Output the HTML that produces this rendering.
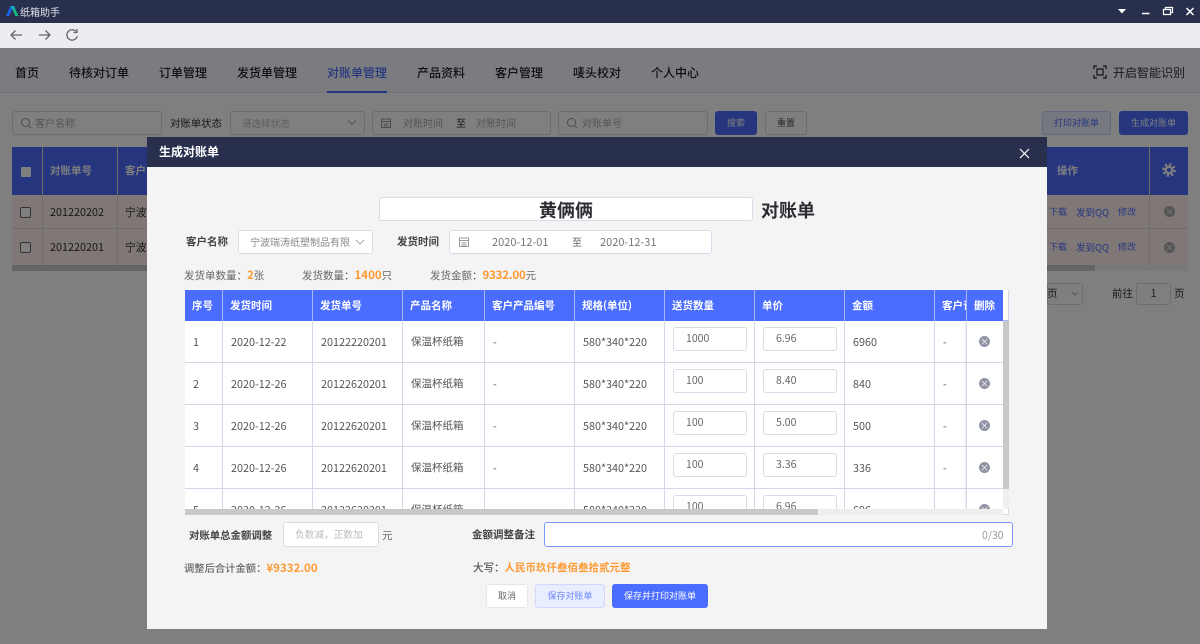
<!DOCTYPE html>
<html lang="zh"><head><meta charset="utf-8"><title>纸箱助手</title>
<style>
*{box-sizing:border-box;margin:0;padding:0}
html,body{width:1200px;height:644px;overflow:hidden;background:#fff}
body{position:relative;font-family:"Noto Sans CJK SC","Liberation Sans",sans-serif;font-size:12px;color:#333}
.a{position:absolute}
.t{position:absolute;white-space:nowrap;line-height:16px}
.b{font-weight:700}
.k{font-family:"Noto Sans CJK TC","Noto Sans CJK SC",sans-serif}
.box{position:absolute;background:#fff;border:1px solid #d9dbe8;border-radius:3px}
.o{color:#ff9a33;font-weight:700}
.h{position:absolute;top:290px;height:31px;background:#4a6cff;color:#fff;font-weight:700;font-size:10.500px;line-height:31px;white-space:nowrap;overflow:hidden;border-right:1px solid #a9b8f5;padding-left:7px}
.c{position:absolute;color:#555;white-space:nowrap;line-height:16px;font-size:10.800px}
.vl{position:absolute;width:1px;top:321px;height:188px;background:#d4d7e8}
.hl{position:absolute;left:185px;width:818px;height:1px;background:#d4d7e8}
.inp{position:absolute;width:74px;height:24px;background:#fff;border:1px solid #d9dbe8;border-radius:3px;color:#666;font-size:10.500px;line-height:22px;padding-left:12px}
.nav{position:absolute;top:64px;font-size:12px;line-height:18px;color:#1f2026;white-space:nowrap;font-weight:500}
.x{position:absolute;width:11px;height:11px;border-radius:50%;background:#8f93a3;color:#fff;font-size:9px;line-height:11px;text-align:center}
.btn{text-align:center;font-size:9px;line-height:22px}
.lk{color:#4a6cff;font-size:9px}
</style></head><body>

<!-- underlying page -->
<div class="a" style="left:0;top:0;width:1200px;height:23px;background:#29304d"></div>
<svg class="a" style="left:6px;top:6px" width="13" height="10" viewBox="0 0 13 10"><path d="M4.500 0H8l4.500 10H9.300L6.300 3z" fill="#12b886"/><path d="M4.500 0 0 10h3L6.300 3 6 0z" fill="#1a62e8"/><path d="M4.500 0H8L9 2.500H5.500z" fill="#18a8c8"/></svg>
<div class="t" style="left:20px;top:4px;color:#dfe2ea;font-size:10px">纸箱助手</div>
<svg class="a" style="left:1110px;top:4px" width="90" height="16" viewBox="0 0 90 16" fill="none" stroke="#fff"><path d="M8 5h8l-4 4.500z" fill="#fff" stroke="none"/><path d="M32 9.500h7.500" stroke-width="1.500"/><path d="M53.500 5.500h7v5h-7zM55.500 5.500V3.500h7v5h-2" stroke-width="1.200"/><path d="M76.500 4l7 7M83.500 4l-7 7" stroke-width="1.500"/></svg>
<div class="a" style="left:0;top:23px;width:1200px;height:25px;background:#ecedf2"></div>
<svg class="a" style="left:8px;top:27px" width="74" height="16" viewBox="0 0 74 16" fill="none" stroke="#666" stroke-width="1.300"><path d="M3 8h11M7.500 3.500 3 8l4.500 4.500"/><path d="M31 8h11M37.500 3.500 42 8l-4.500 4.500"/><path d="M68 4.500A5.200 5.200 0 1 0 69.200 9"/><path d="M69 2v3.500h-3.500"/></svg>

<div class="a" style="left:0;top:48px;width:1200px;height:45px;background:#f7f9ff;border-bottom:1px solid #e4e5ea"></div>
<div class="nav" style="left:15px">首页</div>
<div class="nav" style="left:69px">待核对订单</div>
<div class="nav" style="left:159px">订单管理</div>
<div class="nav" style="left:237px">发货单管理</div>
<div class="nav" style="left:327px;color:#4a6cff">对账单管理</div>
<div class="a" style="left:327px;top:91px;width:60px;height:2px;background:#4a6cff"></div>
<div class="nav" style="left:417px">产品资料</div>
<div class="nav" style="left:495px">客户管理</div>
<div class="nav" style="left:573px">唛头校对</div>
<div class="nav" style="left:651px">个人中心</div>
<svg class="a" style="left:1093px;top:65px" width="14" height="14" viewBox="0 0 14 14" fill="none" stroke="#333" stroke-width="1.300"><path d="M1 4V1h3M10 1h3v3M13 10v3h-3M4 13H1v-3"/><rect x="4" y="4" width="6" height="6"/></svg>
<div class="t" style="left:1113px;top:64px;color:#333;font-size:12px;line-height:18px">开启智能识别</div>

<div class="box" style="left:12px;top:111px;width:150px;height:24px"></div>
<svg class="a" style="left:20px;top:117px" width="12" height="12" viewBox="0 0 12 12" fill="none" stroke="#999"><circle cx="5.500" cy="5.500" r="4"/><path d="M8.500 8.500 11 11"/></svg>
<div class="t" style="left:35px;top:115px;color:#aaa;font-size:10px">客户名称</div>
<div class="t" style="left:170px;top:115px;font-size:10.400px">对账单状态</div>
<div class="box" style="left:230px;top:111px;width:135px;height:24px"></div>
<div class="t" style="left:242px;top:115px;color:#bbb;font-size:9.600px">请选择状态</div>
<svg class="a" style="left:347px;top:119px" width="10" height="8" viewBox="0 0 10 8" fill="none" stroke="#aaa"><path d="M1 1.500 5 5.500 9 1.500"/></svg>
<div class="box" style="left:372px;top:111px;width:179px;height:24px"></div>
<svg class="a" style="left:381px;top:118px" width="10" height="10" viewBox="0 0 10 10" fill="none" stroke="#999"><rect x=".5" y="1" width="9" height="8.500"/><path d="M.5 3.500h9M2.500 6h5M2.500 8h5"/></svg>
<div class="t" style="left:403px;top:115px;color:#aaa;font-size:10px">对账时间</div>
<div class="t" style="left:456px;top:115px;font-size:10px">至</div>
<div class="t" style="left:476px;top:115px;color:#aaa;font-size:10px">对账时间</div>
<div class="box" style="left:558px;top:111px;width:150px;height:24px"></div>
<svg class="a" style="left:566px;top:117px" width="12" height="12" viewBox="0 0 12 12" fill="none" stroke="#999"><circle cx="5.500" cy="5.500" r="4"/><path d="M8.500 8.500 11 11"/></svg>
<div class="t" style="left:582px;top:115px;color:#aaa;font-size:10px">对账单号</div>
<div class="box btn" style="left:715px;top:111px;width:42px;height:24px;background:#4a6cff;border-color:#4a6cff;color:#fff">搜索</div>
<div class="box btn" style="left:765px;top:111px;width:42px;height:24px;color:#555">重置</div>
<div class="box btn" style="left:1042px;top:111px;width:69px;height:24px;background:#ecf0ff;border-color:#c8d2f8;color:#4a6cff">打印对账单</div>
<div class="box btn" style="left:1119px;top:111px;width:69px;height:24px;background:#4a6cff;border-color:#4a6cff;color:#fff">生成对账单</div>

<div class="a" style="left:12px;top:147px;width:1176px;height:48px;background:#4a6cff"></div>
<div class="a" style="left:12px;top:195px;width:1176px;height:34px;background:#fff0ee;border-bottom:1px solid #ddd"></div>
<div class="a" style="left:12px;top:229px;width:1176px;height:36px;background:#fff0ee"></div>
<div class="a" style="left:12px;top:265px;width:1176px;height:6px;background:#f0f0f0"></div>
<div class="a" style="left:12px;top:265px;width:1083px;height:6px;background:#c8c8c8"></div>
<div class="a" style="left:42px;top:147px;width:1px;height:118px;background:#ddd"></div>
<div class="a" style="left:117px;top:147px;width:1px;height:118px;background:#ddd"></div>
<div class="a" style="left:1149px;top:147px;width:1px;height:118px;background:#ddd"></div>
<div class="a" style="left:21px;top:167px;width:10px;height:10px;background:#fff;border-radius:1px"></div>
<div class="a" style="left:20px;top:207px;width:11px;height:11px;border:1px solid #666;border-radius:2px;background:#fff"></div>
<div class="a" style="left:20px;top:242px;width:11px;height:11px;border:1px solid #666;border-radius:2px;background:#fff"></div>
<div class="t" style="left:50px;top:163px;color:#fff;font-weight:700;font-size:10.500px">对账单号</div>
<div class="t" style="left:125px;top:163px;color:#fff;font-weight:700;font-size:10.500px">客户</div>
<div class="t" style="left:50px;top:204px;font-size:10.800px">201220202</div>
<div class="t" style="left:50px;top:239px;font-size:10.800px">201220201</div>
<div class="t" style="left:125px;top:204px;font-size:10.800px">宁波</div>
<div class="t" style="left:125px;top:239px;font-size:10.800px">宁波</div>
<div class="t" style="left:1057px;top:163px;color:#fff;font-weight:700;font-size:10.500px">操作</div>
<div class="t lk" style="left:1049px;top:204px">下载</div><div class="t lk" style="left:1076px;top:204px;font-size:9.500px">发到QQ</div><div class="t lk" style="left:1118px;top:204px">修改</div>
<div class="t lk" style="left:1049px;top:239px">下载</div><div class="t lk" style="left:1076px;top:239px;font-size:9.500px">发到QQ</div><div class="t lk" style="left:1118px;top:239px">修改</div>
<svg class="a" style="left:1162px;top:163px" width="14" height="14" viewBox="0 0 14 14" fill="none" stroke="#fff"><circle cx="7" cy="7" r="3.300" stroke-width="2.400"/><circle cx="7" cy="7" r="5.700" stroke-width="2.400" stroke-dasharray="2.240 2.240"/></svg>
<div class="x" style="left:1164px;top:206px;background:#aaa">×</div>
<div class="x" style="left:1164px;top:242px;background:#aaa">×</div>
<div class="box" style="left:1047px;top:283px;width:36px;height:22px"></div>
<div class="t" style="left:1047px;top:286px;font-size:10.500px">页</div>
<svg class="a" style="left:1071px;top:291px" width="8" height="6" viewBox="0 0 8 6" fill="none" stroke="#aaa"><path d="M1 1l3 3 3-3"/></svg>
<div class="t" style="left:1112px;top:286px;font-size:10.500px">前往</div>
<div class="box" style="left:1136px;top:283px;width:35px;height:22px;text-align:center;line-height:20px;font-size:10.500px">1</div>
<div class="t" style="left:1174px;top:286px;font-size:10.500px">页</div>

<!-- dim overlay -->
<div class="a" style="left:0;top:48px;width:1200px;height:596px;background:rgba(0,0,0,.5)"></div>

<!-- modal -->
<div class="a" style="left:147px;top:137px;width:900px;height:492px;background:#f4f4f5"></div>
<div class="a" style="left:147px;top:137px;width:900px;height:30px;background:#29304d"></div>
<div class="t b" style="left:159px;top:144px;color:#fff;font-size:12px">生成对账单</div>
<svg class="a" style="left:1019px;top:148px" width="11" height="11" viewBox="0 0 11 11" stroke="#fff" stroke-width="1.200"><path d="M1 1l9 9M10 1l-9 9"/></svg>

<div class="box" style="left:379px;top:197px;width:374px;height:24px"></div>
<div class="t b" style="left:539px;top:198px;font-size:18px;line-height:24px;color:#2b2d33">黄俩俩</div>
<div class="t b" style="left:761px;top:198px;font-size:18px;line-height:24px;color:#2b2d33">对账单</div>

<div class="t b" style="left:186px;top:234px;font-size:10.500px;color:#444">客户名称</div>
<div class="box" style="left:238px;top:230px;width:135px;height:24px"></div>
<div class="t" style="left:250px;top:234px;width:101px;overflow:hidden;color:#888;font-size:10px">宁波瑞涛纸塑制品有限公司</div>
<svg class="a" style="left:355px;top:239px" width="10" height="7" viewBox="0 0 10 7" fill="none" stroke="#aaa"><path d="M1 1l4 4 4-4"/></svg>
<div class="t b" style="left:397px;top:234px;font-size:10.500px;color:#444">发货时间</div>
<div class="box" style="left:449px;top:230px;width:263px;height:24px"></div>
<svg class="a" style="left:459px;top:237px" width="10" height="10" viewBox="0 0 10 10" fill="none" stroke="#999"><rect x=".5" y="1" width="9" height="8.500"/><path d="M.5 3.500h9M2.500 6h5M2.500 8h5"/></svg>
<div class="t" style="left:492px;top:234px;color:#777;font-size:11px">2020-12-01</div>
<div class="t" style="left:572px;top:234px;color:#666;font-size:10px">至</div>
<div class="t" style="left:600px;top:234px;color:#777;font-size:11px">2020-12-31</div>

<div class="t" style="left:184px;top:267px;color:#666;font-size:10.500px">发货单数量<span class="k">：</span><span class="o" style="font-size:11.500px">2</span>张</div>
<div class="t" style="left:302px;top:267px;color:#666;font-size:10.500px">发货数量<span class="k">：</span><span class="o" style="font-size:11.500px">1400</span>只</div>
<div class="t" style="left:430px;top:267px;color:#666;font-size:10.500px">发货金额<span class="k">：</span><span class="o" style="font-size:11.500px;letter-spacing:-.2px">9332.00</span>元</div>

<!-- table -->
<div class="a" style="left:185px;top:290px;width:824px;height:225px;background:#fff;border-right:1px solid #d4d7e8;border-bottom:1px solid #d4d7e8"></div>
<div class="h" style="left:185px;width:38px">序号</div>
<div class="h" style="left:223px;width:90px">发货时间</div>
<div class="h" style="left:313px;width:90px">发货单号</div>
<div class="h" style="left:403px;width:82px">产品名称</div>
<div class="h" style="left:485px;width:90px">客户产品编号</div>
<div class="h" style="left:575px;width:90px">规格(单位)</div>
<div class="h" style="left:665px;width:90px">送货数量</div>
<div class="h" style="left:755px;width:90px">单价</div>
<div class="h" style="left:845px;width:90px">金额</div>
<div class="h" style="left:935px;width:32px">客户订单</div>
<div class="h" style="left:967px;width:36px;border-right:0">删除</div>
<div class="a" style="left:1003px;top:320px;width:6px;height:1px;background:#a9b8f5"></div>

<div class="vl" style="left:222px"></div><div class="vl" style="left:312px"></div><div class="vl" style="left:402px"></div><div class="vl" style="left:484px"></div><div class="vl" style="left:574px"></div><div class="vl" style="left:664px"></div><div class="vl" style="left:754px"></div><div class="vl" style="left:844px"></div><div class="vl" style="left:934px"></div>
<div class="hl" style="top:362px"></div><div class="hl" style="top:404px"></div><div class="hl" style="top:446px"></div><div class="hl" style="top:488px"></div>

<div class="c" style="left:193px;top:334px">1</div><div class="c" style="left:231px;top:334px">2020-12-22</div><div class="c" style="left:321px;top:334px">20122220201</div><div class="c" style="left:411px;top:334px;font-size:10.500px">保温杯纸箱</div><div class="c" style="left:493px;top:334px">-</div><div class="c" style="left:583px;top:334px">580*340*220</div><div class="inp" style="left:673px;top:327px">1000</div><div class="inp" style="left:763px;top:327px">6.96</div><div class="c" style="left:853px;top:334px">6960</div><div class="c" style="left:943px;top:334px">-</div>
<div class="c" style="left:193px;top:376px">2</div><div class="c" style="left:231px;top:376px">2020-12-26</div><div class="c" style="left:321px;top:376px">20122620201</div><div class="c" style="left:411px;top:376px;font-size:10.500px">保温杯纸箱</div><div class="c" style="left:493px;top:376px">-</div><div class="c" style="left:583px;top:376px">580*340*220</div><div class="inp" style="left:673px;top:369px">100</div><div class="inp" style="left:763px;top:369px">8.40</div><div class="c" style="left:853px;top:376px">840</div><div class="c" style="left:943px;top:376px">-</div>
<div class="c" style="left:193px;top:418px">3</div><div class="c" style="left:231px;top:418px">2020-12-26</div><div class="c" style="left:321px;top:418px">20122620201</div><div class="c" style="left:411px;top:418px;font-size:10.500px">保温杯纸箱</div><div class="c" style="left:493px;top:418px">-</div><div class="c" style="left:583px;top:418px">580*340*220</div><div class="inp" style="left:673px;top:411px">100</div><div class="inp" style="left:763px;top:411px">5.00</div><div class="c" style="left:853px;top:418px">500</div><div class="c" style="left:943px;top:418px">-</div>
<div class="c" style="left:193px;top:460px">4</div><div class="c" style="left:231px;top:460px">2020-12-26</div><div class="c" style="left:321px;top:460px">20122620201</div><div class="c" style="left:411px;top:460px;font-size:10.500px">保温杯纸箱</div><div class="c" style="left:493px;top:460px">-</div><div class="c" style="left:583px;top:460px">580*340*220</div><div class="inp" style="left:673px;top:453px">100</div><div class="inp" style="left:763px;top:453px">3.36</div><div class="c" style="left:853px;top:460px">336</div><div class="c" style="left:943px;top:460px">-</div>
<div class="c" style="left:193px;top:502px">5</div><div class="c" style="left:231px;top:502px">2020-12-26</div><div class="c" style="left:321px;top:502px">20122620201</div><div class="c" style="left:411px;top:502px;font-size:10.500px">保温杯纸箱</div><div class="c" style="left:493px;top:502px">-</div><div class="c" style="left:583px;top:502px">580*340*220</div><div class="inp" style="left:673px;top:495px">100</div><div class="inp" style="left:763px;top:495px">6.96</div><div class="c" style="left:853px;top:502px">696</div><div class="c" style="left:943px;top:502px">-</div>

<!-- fixed delete column -->
<div class="a" style="left:966px;top:321px;width:37px;height:188px;background:#fff;border-left:1px solid #d4d7e8;box-shadow:-1px 0 2px rgba(0,0,0,.08)"></div>
<div class="a" style="left:967px;top:362px;width:36px;height:1px;background:#d4d7e8"></div><div class="a" style="left:967px;top:404px;width:36px;height:1px;background:#d4d7e8"></div><div class="a" style="left:967px;top:446px;width:36px;height:1px;background:#d4d7e8"></div><div class="a" style="left:967px;top:488px;width:36px;height:1px;background:#d4d7e8"></div>
<div class="x" style="left:979px;top:336px">×</div><div class="x" style="left:979px;top:378px">×</div><div class="x" style="left:979px;top:420px">×</div><div class="x" style="left:979px;top:462px">×</div><div class="x" style="left:979px;top:504px">×</div>
<!-- scrollbars -->
<div class="a" style="left:1003px;top:321px;width:6px;height:188px;background:#f0f0f0"></div>
<div class="a" style="left:1003px;top:321px;width:6px;height:168px;background:#c8c8c8"></div>
<div class="a" style="left:185px;top:509px;width:818px;height:6px;background:#eee"></div>
<div class="a" style="left:185px;top:509px;width:633px;height:6px;background:#c8c8c8"></div>
<div class="a" style="left:1003px;top:509px;width:6px;height:6px;background:#fff;border-right:1px solid #d4d7e8;border-bottom:1px solid #d4d7e8"></div>
<!-- clip overflow of row 5 -->
<div class="a" style="left:185px;top:515px;width:824px;height:7px;background:#f4f4f5"></div>

<div class="t b" style="left:189px;top:527px;font-size:10.400px;color:#444">对账单总金额调整</div>
<div class="box" style="left:283px;top:522px;width:96px;height:25px;color:#bbb;font-size:9.700px;line-height:23px;padding-left:11px">负数减<span class="k">，</span>正数加</div>
<div class="t" style="left:382px;top:528px;color:#666;font-size:10.500px">元</div>
<div class="t b" style="left:472px;top:527px;font-size:10.500px;color:#444">金额调整备注</div>
<div class="box" style="left:544px;top:522px;width:469px;height:25px;border-color:#7d96ff"></div>
<div class="t" style="left:982px;top:528px;color:#999;font-size:10.500px">0/30</div>

<div class="t" style="left:184px;top:560px;color:#666;font-size:10.300px;font-weight:500">调整后合计金额<span class="k">：</span><span class="o" style="font-size:11.500px">¥9332.00</span></div>
<div class="t" style="left:473px;top:560px;color:#555;font-size:10.500px;font-weight:500">大写<span class="k">：</span><span class="o" style="font-size:10.500px">人民币玖仟叁佰叁拾贰元整</span></div>

<div class="box btn" style="left:486px;top:584px;width:42px;height:24px;color:#666;border-color:#e6e7ee">取消</div>
<div class="box btn" style="left:535px;top:584px;width:70px;height:24px;background:#e9eefe;border-color:#cfd9fb;color:#6c87ff">保存对账单</div>
<div class="box btn" style="left:612px;top:584px;width:96px;height:24px;background:#4a6cff;border-color:#4a6cff;color:#fff">保存并打印对账单</div>
</body></html>
